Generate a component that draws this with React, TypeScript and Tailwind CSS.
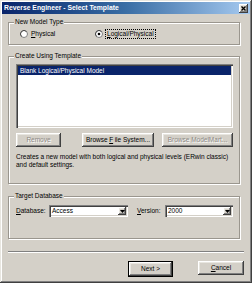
import React from "react";

const raised =
  "bg-[#d4d0c8] shadow-[inset_-1px_-1px_0_#404040,inset_1px_1px_0_#ffffff,inset_-2px_-2px_0_#808080,inset_2px_2px_0_#e8e6e0]";
const sunken =
  "shadow-[inset_1px_1px_0_#808080,inset_2px_2px_0_#404040,inset_-1px_-1px_0_#ffffff,inset_-2px_-2px_0_#d4d0c8]";
const etched =
  "border border-[#9a968e] shadow-[inset_1px_1px_0_#ffffff,1px_1px_0_#ffffff]";

function Radio({ checked }: { checked?: boolean }) {
  return (
    <svg width="8" height="8" viewBox="0 0 8 8" className="shrink-0">
      <circle cx="4" cy="4" r="3.5" fill="#ffffff" stroke="#808080" strokeWidth="1" />
      <path d="M1.5 6.5 A3.5 3.5 0 0 1 6.5 1.5" fill="none" stroke="#404040" strokeWidth="0.8" />
      {checked && <circle cx="4" cy="4" r="1.3" fill="#000000" />}
    </svg>
  );
}

function Combo({ value, w }: { value: string; w: string }) {
  return (
    <div className={`${w} h-[12px] bg-white ${sunken} flex items-center pl-[3px] pr-[2px]`}>
      <span className="flex-1 leading-[8px]">{value}</span>
      <div className={`${raised} w-[8px] h-[8px] flex items-center justify-center`}>
        <svg width="5" height="3" viewBox="0 0 5 3">
          <path d="M0 0 H5 L2.5 3 Z" fill="#000000" />
        </svg>
      </div>
    </div>
  );
}

function Btn({
  children,
  w,
  disabled,
}: {
  children: React.ReactNode;
  w: string;
  disabled?: boolean;
}) {
  return (
    <div
      className={`${w} h-[14px] ${raised} flex items-center justify-center leading-[8px] ${
        disabled ? "text-[#8c8984] [text-shadow:1px_1px_0_#ffffff]" : "text-black"
      }`}
    >
      {children}
    </div>
  );
}

export default function App() {
  return (
    <div
      className="w-[252px] h-[283px] bg-[#d4d0c8] p-[2px] flex flex-col text-[6.5px] text-black shadow-[inset_-1px_-1px_0_#404040,inset_1px_1px_0_#e8e6e0,inset_-2px_-2px_0_#808080,inset_2px_2px_0_#ffffff]"
      style={{ fontFamily: '"Liberation Sans", Arial, sans-serif' }}
    >
      {/* Title bar */}
      <div className="h-[12px] bg-gradient-to-r from-[#0a246a] via-[#3a6ea5] to-[#a6caf0] flex items-center justify-between pl-[2px] pr-[2px]">
        <span className="text-white font-bold text-[6.8px] leading-[8px]">
          Reverse Engineer - Select Template
        </span>
        <div className={`${raised} w-[9px] h-[9px] flex items-center justify-center`}>
          <svg width="5" height="5" viewBox="0 0 5 5">
            <path d="M0.5 0.5 L4.5 4.5 M4.5 0.5 L0.5 4.5" stroke="#000000" strokeWidth="1.3" />
          </svg>
        </div>
      </div>

      <div className="flex flex-col pl-[6px] pr-[6px]">
        {/* New Model Type */}
        <fieldset className={`${etched} mt-[4px] mr-[4px] pl-[7px] pr-[7px] pt-[4px] pb-[6px]`}>
          <legend className="leading-[8px] px-[1px] -ml-[2px] bg-[#d4d0c8]">New Model Type</legend>
          <div className="flex items-center h-[8px]">
            <div className="flex items-center gap-[3px] pl-[4px] w-[79px]">
              <Radio />
              <span className="leading-[8px]">
                <span className="underline">P</span>hysical
              </span>
            </div>
            <div className="flex items-center gap-[2px]">
              <Radio checked />
              <span className="leading-[8px] border border-dotted border-black px-[1px]">
                <span className="underline">L</span>ogical/Physical
              </span>
            </div>
          </div>
        </fieldset>

        {/* Create Using Template */}
        <fieldset className={`${etched} mt-[7px] mr-[4px] pl-[7px] pr-[6px] pt-[4px] pb-[14px]`}>
          <legend className="leading-[8px] px-[1px] -ml-[2px] bg-[#d4d0c8]">Create Using Template</legend>
          <div className={`h-[64px] bg-white ${sunken} p-[2px]`}>
            <div className="h-[9px] bg-[#0a246a] text-white leading-[9px] pl-[2px]">
              Blank Logical/Physical Model
            </div>
          </div>
          <div className="flex items-center mt-[5px]">
            <Btn w="w-[45px]" disabled>
              Remove
            </Btn>
            <div className="ml-[21px]">
              <Btn w="w-[72px]">
                Browse <span className="underline mx-[1.5px]">F</span>ile System...
              </Btn>
            </div>
            <div className="ml-[8px]">
              <Btn w="w-[71px]" disabled>
                Browse ModelMart...
              </Btn>
            </div>
          </div>
          <p className="mt-[6px] leading-[8px]">
            Creates a new model with both logical and physical levels (ERwin classic)
            <br />
            and default settings.
          </p>
        </fieldset>

        {/* Target Database */}
        <fieldset className={`${etched} mt-[8px] mr-[4px] pl-[7px] pr-[6px] pt-[5px] pb-[21px]`}>
          <legend className="leading-[8px] px-[1px] -ml-[2px] bg-[#d4d0c8]">Target Database</legend>
          <div className="flex items-center">
            <span className="w-[33px] leading-[8px]">
              <span className="underline">D</span>atabase:
            </span>
            <Combo value="Access" w="w-[79px]" />
            <span className="ml-[9px] w-[28px] leading-[8px]">
              <span className="underline">V</span>ersion:
            </span>
            <Combo value="2000" w="w-[68px]" />
          </div>
        </fieldset>

        {/* separator */}
        <div className="mt-[12px] h-[2px] border-t border-t-[#808080] border-b border-b-white" />

        <div className="flex justify-end mt-[8px] gap-[25px]">
          <div className="border border-black">
            <Btn w="w-[43px]">Next &gt;</Btn>
          </div>
          <Btn w="w-[46px]">
            <span className="underline">C</span>ancel
          </Btn>
        </div>
      </div>
    </div>
  );
}
